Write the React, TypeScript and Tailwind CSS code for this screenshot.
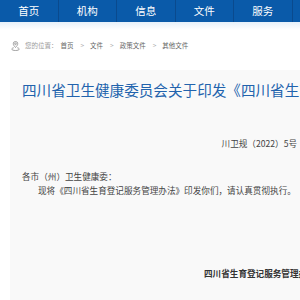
const navItems = ["首页", "机构", "信息", "文件", "服务"];
const crumbs = ["首页", "文件", "政策文件", "其他文件"];

const LocationIcon = () => (
  <svg width="9" height="10" viewBox="0 0 18 20" fill="none" stroke="#8a8a8a" strokeWidth="1.6">
    <path d="M9 13c-3-3.2-4.5-5.6-4.5-7.5a4.5 4.5 0 0 1 9 0C13.5 7.4 12 9.8 9 13z" />
    <circle cx="9" cy="5.6" r="1.7" />
    <path d="M5.5 13.5C3 14 1.5 15 1.5 16.2 1.5 17.8 4.9 19 9 19s7.5-1.2 7.5-2.8c0-1.2-1.5-2.2-4-2.7" />
  </svg>
);

const App = () => {
  return (
    <div className="w-[300px] h-[300px] overflow-hidden bg-white font-['Noto_Sans_CJK_SC',sans-serif]">
      <div className="flex h-[22px] bg-[#0a5aa9]">
        {navItems.map((item) => (
          <div
            key={item}
            className="w-[58.5px] shrink-0 flex items-center justify-center border-r border-[#0a4a8e] text-white text-[10.5px]"
          >
            {item}
          </div>
        ))}
      </div>
      <div className="h-[8px] bg-gradient-to-b from-[#e6f0fa] to-white"></div>
      <div className="flex items-center gap-[3px] h-[32px] pl-[11px] text-[6.5px] text-[#9a9a9a]">
        <LocationIcon />
        <span className="ml-[2px]">您的位置：</span>
        {crumbs.map((c, i) => (
          <span key={c} className="flex items-center gap-[4px]">
            <span className="text-[#666]">{c}</span>
            {i < crumbs.length - 1 && <span className="text-[#aaa] mx-[3px]">&gt;</span>}
          </span>
        ))}
      </div>
      <div className="ml-[10px] mt-[8px] bg-[#f9f9f9] h-[300px] pl-[12px] pt-[10px]">
        <h1 className="whitespace-nowrap text-[14.6px] leading-[20px] text-[#2263ad]">
          四川省卫生健康委员会关于印发《四川省生育登记服务管理办法》的通知
        </h1>
        <div className="font-['Noto_Sans_CJK_SC',serif] text-[8.6px] text-[#444]">
          <p className="mt-[37px] pr-[3px] text-right whitespace-nowrap">川卫规（2022）5号</p>
          <p className="mt-[20px] whitespace-nowrap">各市（州）卫生健康委：</p>
          <p className="mt-[1px] pl-[16px] whitespace-nowrap">
            现将《四川省生育登记服务管理办法》印发你们，请认真贯彻执行。
          </p>
          <p className="mt-[70px] pl-[182px] whitespace-nowrap font-bold text-[#333]">
            四川省生育登记服务管理办法
          </p>
        </div>
      </div>
    </div>
  );
};

export default App;
